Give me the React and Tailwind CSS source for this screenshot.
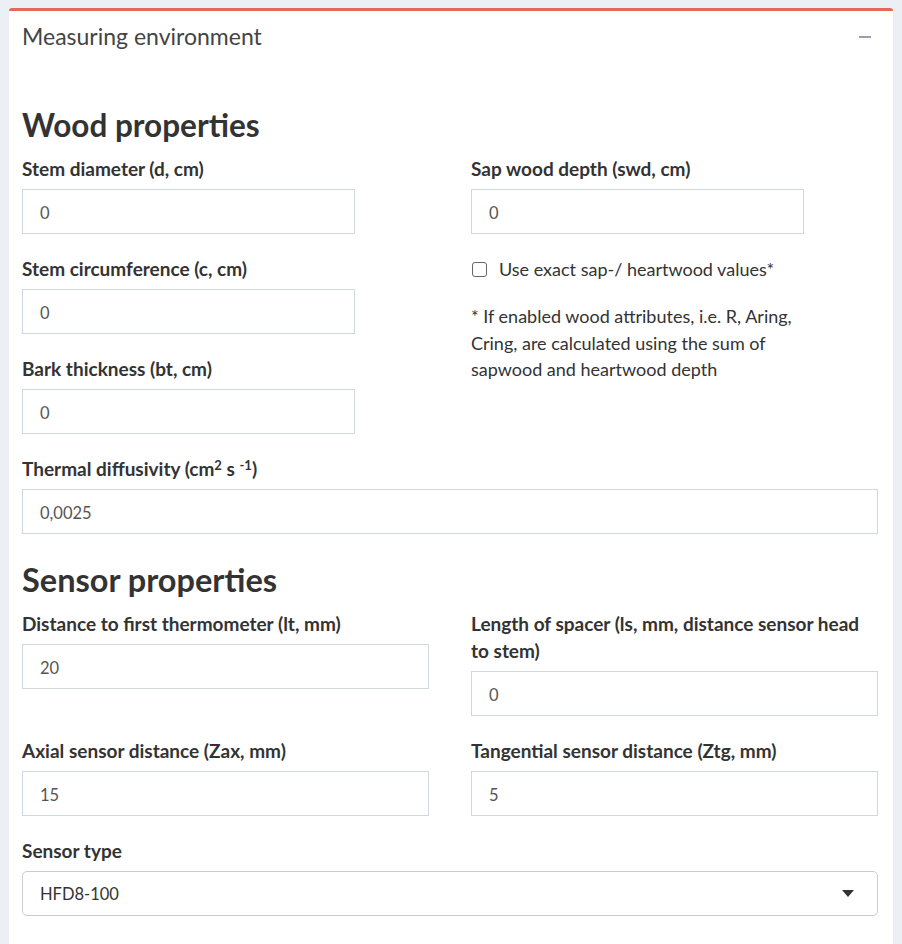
import React from "react";

const font = { fontFamily: "Lato, 'Liberation Sans', sans-serif" };

function Label({ children, className = "" }) {
  return (
    <label className={`block font-bold text-[19px] leading-[27px] text-[#333] mb-[6px] ${className}`}>
      <span className="block -translate-y-[1px]">{children}</span>
    </label>
  );
}

function Input({ value, className = "w-full" }) {
  return (
    <div className={`h-[45px] border border-[#d2d6de] bg-white flex items-center px-[17px] pt-[3px] text-[16.5px] text-[#555] ${className}`}>
      {value}
    </div>
  );
}

export default function App() {
  return (
    <div className="bg-[#ecf0f5] min-h-[944px] pt-[8px] px-[9px]" style={font}>
      <div className="bg-white border-t-[3px] border-[#e4675a] rounded-t-[3px] min-h-[936px] shadow-[0_1px_1px_rgba(0,0,0,0.08)]">
        <div className="h-[52px] pb-[2px] flex items-center justify-between pl-[13px] pr-[22px]">
          <span className="text-[23px] text-[#444]">Measuring environment</span>
          <span className="block w-[12px] h-[2px] bg-[#97a0b3] mt-[2px]" />
        </div>
        <div className="pl-[13px] pr-[15px]">
          <h2 className="mt-[42px] h-[40px] leading-[40px] text-[31.5px] font-bold text-[#333]">Wood properties</h2>
          <div className="grid grid-cols-2 gap-x-[42px] mt-[11px]">
            <div>
              <Label>Stem diameter (d, cm)</Label>
              <Input value="0" className="w-[333px]" />
              <Label className="mt-[22px]">Stem circumference (c, cm)</Label>
              <Input value="0" className="w-[333px]" />
              <Label className="mt-[22px]">Bark thickness (bt, cm)</Label>
              <Input value="0" className="w-[333px]" />
            </div>
            <div>
              <Label>Sap wood depth (swd, cm)</Label>
              <Input value="0" className="w-[333px]" />
              <div className="mt-[22px] h-[27px] flex items-center gap-[12px] text-[18px] text-[#333]">
                <span className="block w-[15px] h-[15px] border border-[#666] rounded-[3px] ml-[1px]" />
                <span>Use exact sap-/ heartwood values*</span>
              </div>
              <p className="mt-[20px] w-[345px] text-[18px] leading-[26.5px] text-[#333]">
                * If enabled wood attributes, i.e. R, Aring, Cring, are calculated using the sum of sapwood and heartwood depth
              </p>
            </div>
          </div>
          <Label className="mt-[22px]">
            Thermal diffusivity (cm<sup className="text-[13px]">2</sup> s <sup className="text-[13px]">-1</sup>)
          </Label>
          <Input value="0,0025" />
          <h2 className="mt-[26px] h-[40px] leading-[40px] text-[32.5px] font-bold text-[#333]">Sensor properties</h2>
          <div className="grid grid-cols-2 gap-x-[42px] mt-[11px]">
            <div>
              <Label>Distance to first thermometer (lt, mm)</Label>
              <Input value="20" />
            </div>
            <div>
              <Label>Length of spacer (ls, mm, distance sensor head to stem)</Label>
              <Input value="0" />
            </div>
            <div className="mt-[22px]">
              <Label>Axial sensor distance (Zax, mm)</Label>
              <Input value="15" />
            </div>
            <div className="mt-[22px]">
              <Label>Tangential sensor distance (Ztg, mm)</Label>
              <Input value="5" />
            </div>
          </div>
          <Label className="mt-[22px]">Sensor type</Label>
          <div className="h-[45px] border border-[#ccc] rounded-[5px] flex items-center justify-between pl-[17px] pr-[23px] pt-[2px] text-[16.5px] text-[#333]">
            <span>HFD8-100</span>
            <svg width="12" height="7" viewBox="0 0 12 7" className="-mt-[2px]"><path d="M0 0h12L6 7z" fill="#333" /></svg>
          </div>
        </div>
      </div>
    </div>
  );
}
